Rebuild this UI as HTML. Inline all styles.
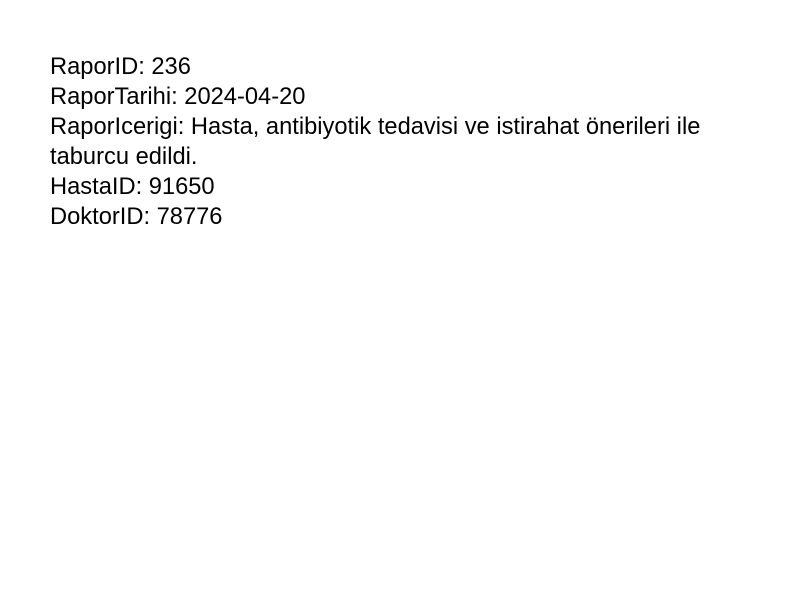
<!DOCTYPE html>
<html><head><meta charset="utf-8"><style>
body{margin:0;background:#fff;font-family:"Liberation Sans",sans-serif;font-size:23.7px;color:#000;}
.c{position:absolute;left:50px;top:52px;width:700px;line-height:30px;}
</style></head><body><div class="c">
<div>RaporID: 236</div>
<div>RaporTarihi: 2024-04-20</div>
<div>RaporIcerigi: Hasta, antibiyotik tedavisi ve istirahat önerileri ile<br>taburcu edildi.</div>
<div>HastaID: 91650</div>
<div>DoktorID: 78776</div>
</div></body></html>
